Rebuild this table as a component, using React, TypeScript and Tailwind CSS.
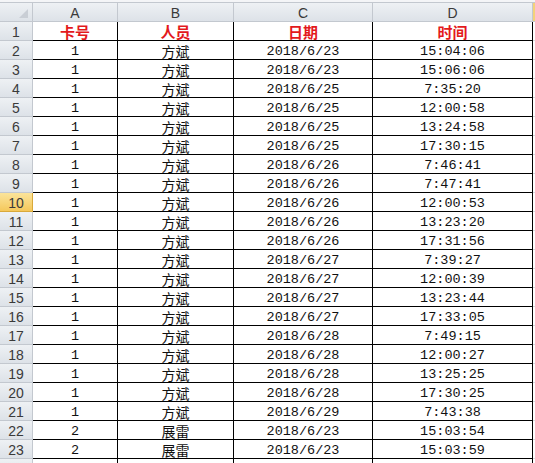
const rows: [string, string, string, string][] = [
  ["1", "方斌", "2018/6/23", "15:04:06"],
  ["1", "方斌", "2018/6/23", "15:06:06"],
  ["1", "方斌", "2018/6/25", "7:35:20"],
  ["1", "方斌", "2018/6/25", "12:00:58"],
  ["1", "方斌", "2018/6/25", "13:24:58"],
  ["1", "方斌", "2018/6/25", "17:30:15"],
  ["1", "方斌", "2018/6/26", "7:46:41"],
  ["1", "方斌", "2018/6/26", "7:47:41"],
  ["1", "方斌", "2018/6/26", "12:00:53"],
  ["1", "方斌", "2018/6/26", "13:23:20"],
  ["1", "方斌", "2018/6/26", "17:31:56"],
  ["1", "方斌", "2018/6/27", "7:39:27"],
  ["1", "方斌", "2018/6/27", "12:00:39"],
  ["1", "方斌", "2018/6/27", "13:23:44"],
  ["1", "方斌", "2018/6/27", "17:33:05"],
  ["1", "方斌", "2018/6/28", "7:49:15"],
  ["1", "方斌", "2018/6/28", "12:00:27"],
  ["1", "方斌", "2018/6/28", "13:25:25"],
  ["1", "方斌", "2018/6/28", "17:30:25"],
  ["1", "方斌", "2018/6/29", "7:43:38"],
  ["2", "展雷", "2018/6/23", "15:03:54"],
  ["2", "展雷", "2018/6/23", "15:03:59"],
];

const titles = ["卡号", "人员", "日期", "时间"];

const cols = "grid grid-cols-[33px_85px_116px_139px_160px_2px]";
const head =
  "flex h-[19px] items-center justify-center border-r border-b border-[#c3c8cf] bg-gradient-to-b from-[#eef1f4] to-[#dde2e8] text-[14px] text-[#3a3a3a] font-['Liberation_Sans',sans-serif] leading-none pt-[2px]";
const cell =
  "flex h-[19px] items-center justify-center border-r border-b border-black bg-white text-[13.5px] text-[#111] font-['Liberation_Mono',monospace] leading-none pt-[3px]";
const cjk =
  "flex h-[19px] items-center justify-center border-r border-b border-black bg-white text-[14px] text-[#111] font-['Noto_Sans_CJK_SC',sans-serif] leading-none pt-[1px]";
const title =
  "flex h-[19px] items-center justify-center border-r border-b border-black bg-white text-[15px] font-bold text-[#e3191c] font-['Noto_Sans_CJK_SC',sans-serif] leading-none";

export default function App() {
  return (
    <div className="h-[463px] w-[535px] overflow-hidden bg-white">
      <div className="h-[3px] border-b border-[#c3c8cf] bg-[#f4f5f7]" />
      <div className={cols}>
        <div className={head + " relative"}>
          <svg
            className="absolute left-[19px] top-[6px]"
            width="9"
            height="9"
            viewBox="0 0 9 9"
          >
            <polygon points="9,0 9,9 0,9" fill="#c9ced5" />
          </svg>
        </div>
        <div className={head}>A</div>
        <div className={head}>B</div>
        <div className={head}>C</div>
        <div className={head}>D</div>
        <div className="h-[19px] border-b border-[#c3c8cf] bg-[#f3d27a]" />

        <div className={head}>1</div>
        {titles.map((t) => (
          <div key={t} className={title}>
            {t}
          </div>
        ))}
        <div className="h-[19px] border-b border-[#d8dbe0]" />

        {rows.map((r, i) => {
          const n = i + 2;
          const selected = n === 10;
          return (
            <div key={n} className="contents">
              <div
                className={
                  selected
                    ? "flex h-[19px] items-center justify-center border-r border-b border-[#d9a93a] bg-gradient-to-b from-[#fbe49a] to-[#f5c85a] text-[14px] text-[#3a3a3a] font-['Liberation_Sans',sans-serif] leading-none pt-[2px]"
                    : head
                }
              >
                {n}
              </div>
              <div className={cell}>{r[0]}</div>
              <div className={cjk}>{r[1]}</div>
              <div className={cell}>{r[2]}</div>
              <div className={cell}>{r[3]}</div>
              <div className="h-[19px] border-b border-[#d8dbe0]" />
            </div>
          );
        })}

        <div className={head} />
        <div className={cell} />
        <div className={cell} />
        <div className={cell} />
        <div className={cell} />
        <div className="h-[19px]" />
      </div>
    </div>
  );
}
